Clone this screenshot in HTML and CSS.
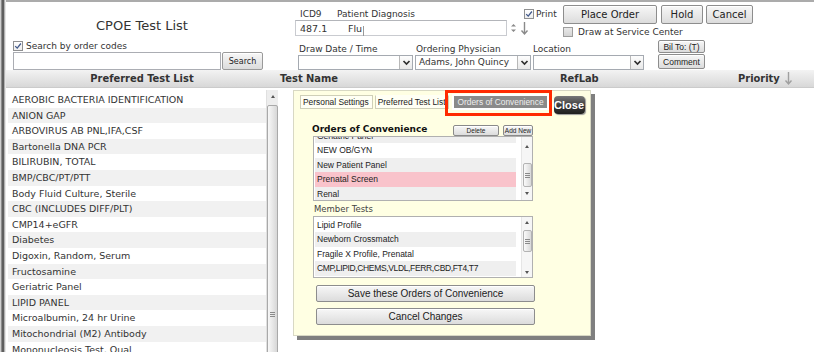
FILE: index.html
```html
<!DOCTYPE html>
<html lang="en">
<head>
    <meta charset="UTF-8">
    <title>CPOE Test List</title>
    <link rel="stylesheet" href="styles.css">
</head>
<body>
<div class="screen">
    <div class="edge"></div>
    <div class="app">

        <!-- Top bar: search + order form -->
        <div class="top">
            <div class="search-panel">
                <h1 class="title">CPOE Test List</h1>
                <div class="check-line">
                    <span class="cb"><svg viewBox="0 0 8 8" width="8" height="8"><path d="M1.2 4.1 3.2 6.1 6.9 1.5"/></svg></span>
                    <span>Search by order codes</span>
                </div>
                <div class="search-row">
                    <span class="textbox"></span>
                    <span class="btn btn-search">Search</span>
                </div>
            </div>

            <div class="order-form">
                <div class="lbl-icd"><span class="icd">ICD9</span><span>Patient Diagnosis</span></div>
                <div class="print">
                    <span class="cb"><svg viewBox="0 0 8 8" width="8" height="8"><path d="M1.2 4.1 3.2 6.1 6.9 1.5"/></svg></span>
                    <span>Print</span>
                </div>
                <span class="btn btn-top btn-place">Place Order</span>
                <span class="btn btn-top btn-hold">Hold</span>
                <span class="btn btn-top btn-cancel">Cancel</span>

                <div class="diag">
                    <div class="diag-box"><span class="diag-code">487.1</span><span>Flu</span><span class="caret"></span></div>
                    <svg class="spin" viewBox="0 0 7 12" width="7" height="12"><path d="M1 4.5 3.5 2 6 4.5Z M1 7.5 3.5 10 6 7.5Z"/></svg>
                    <svg class="down-arrow" viewBox="0 0 9 15" width="9" height="15"><path d="M4.5 1v12 M1.5 9.5 4.5 13 7.5 9.5"/></svg>
                </div>
                <div class="svc">
                    <span class="cb cb-off"></span>
                    <span>Draw at Service Center</span>
                </div>

                <div class="lbl lbl-date">Draw Date / Time</div>
                <div class="lbl lbl-phys">Ordering Physician</div>
                <div class="lbl lbl-loc">Location</div>
                <span class="btn btn-small btn-bill">Bil To: (T)</span>

                <div class="select sel-date">
                    <span class="select-val"></span>
                    <span class="select-btn"><svg viewBox="0 0 11 11" width="11" height="11"><path d="M2.5 4 5.5 7 8.5 4"/></svg></span>
                </div>
                <div class="select sel-phys">
                    <span class="select-val">Adams, John Quincy</span>
                    <span class="select-btn"><svg viewBox="0 0 11 11" width="11" height="11"><path d="M2.5 4 5.5 7 8.5 4"/></svg></span>
                </div>
                <div class="select sel-loc">
                    <span class="select-val"></span>
                    <span class="select-btn"><svg viewBox="0 0 11 11" width="11" height="11"><path d="M2.5 4 5.5 7 8.5 4"/></svg></span>
                </div>
                <span class="btn btn-small btn-comment">Comment</span>
            </div>
        </div>

        <!-- Column headers -->
        <div class="col-head">
            <div class="head-pref">Preferred Test List</div>
            <div class="head-name">Test Name</div>
            <div class="head-lab">RefLab</div>
            <div class="head-pri">Priority
                <svg class="sort" viewBox="0 0 9 15" width="9" height="15"><path d="M4.5 1v12 M1.5 9.5 4.5 13 7.5 9.5"/></svg>
            </div>
        </div>

        <div class="main">
            <!-- Preferred test list -->
            <div class="pref-list">
                <ul class="rows">
                    <li>AEROBIC BACTERIA IDENTIFICATION</li>
                    <li>ANION GAP</li>
                    <li>ARBOVIRUS AB PNL,IFA,CSF</li>
                    <li>Bartonella DNA PCR</li>
                    <li>BILIRUBIN, TOTAL</li>
                    <li>BMP/CBC/PT/PTT</li>
                    <li>Body Fluid Culture, Sterile</li>
                    <li>CBC (INCLUDES DIFF/PLT)</li>
                    <li>CMP14+eGFR</li>
                    <li>Diabetes</li>
                    <li>Digoxin, Random, Serum</li>
                    <li>Fructosamine</li>
                    <li>Geriatric Panel</li>
                    <li>LIPID PANEL</li>
                    <li>Microalbumin, 24 hr Urine</li>
                    <li>Mitochondrial (M2) Antibody</li>
                    <li>Mononucleosis Test, Qual</li>
                </ul>
                <div class="vscroll">
                    <span class="tri-up"></span>
                    <div class="vthumb"><span class="grip"></span></div>
                </div>
            </div>

            <!-- Test area with the orders of convenience dialog -->
            <div class="work">
                <div class="dialog">
                    <div class="tabs">
                        <span class="tab">Personal Settings</span>
                        <span class="tab tab-plain">Preferred Test List</span>
                        <span class="tab tab-on">Orders of Convenience</span>
                        <span class="btn-close">Close</span>
                    </div>
                    <div class="highlight"></div>

                    <div class="oc-head">
                        <h2>Orders of Convenience</h2>
                        <span class="btn btn-tiny btn-del">Delete</span>
                        <span class="btn btn-tiny btn-add">Add New</span>
                    </div>

                    <div class="listbox lb-orders">
                        <ul class="lb-rows">
                            <li class="alt">Geriatric Panel</li>
                            <li>NEW OB/GYN</li>
                            <li class="alt">New Patient Panel</li>
                            <li class="sel">Prenatal Screen</li>
                            <li class="alt">Renal</li>
                        </ul>
                        <div class="mscroll">
                            <span class="tri-up"></span>
                            <div class="mthumb"><span class="grip"></span></div>
                            <span class="tri-down"></span>
                        </div>
                    </div>

                    <div class="member-lbl">Member Tests</div>

                    <div class="listbox lb-members">
                        <ul class="lb-rows">
                            <li>Lipid Profile</li>
                            <li class="alt">Newborn Crossmatch</li>
                            <li>Fragile X Profile, Prenatal</li>
                            <li class="alt tight">CMP,LIPID,CHEMS,VLDL,FERR,CBD,FT4,T7</li>
                            <li>Urinalysis, Complete</li>
                        </ul>
                        <div class="mscroll">
                            <span class="tri-up"></span>
                            <div class="mthumb"><span class="grip"></span></div>
                            <span class="tri-down"></span>
                        </div>
                    </div>

                    <span class="btn btn-wide btn-save">Save these Orders of Convenience</span>
                    <span class="btn btn-wide btn-undo">Cancel Changes</span>
                </div>
            </div>
        </div>

    </div>
</div>
</body>
</html>
```

FILE: styles.css
```css
/* Reset */
* {
    margin: 0;
    padding: 0;
    box-sizing: border-box;
}

body {
    width: 814px;
    height: 352px;
    overflow: hidden;
    background: #fff;
    color: #333;
    font-family: "DejaVu Sans", Verdana, sans-serif;
}

ul {
    list-style: none;
}

.screen {
    display: flex;
    height: 352px;
}

/* Window edge on the left */
.edge {
    width: 6px;
    flex: none;
    background: linear-gradient(to right, #cfcfcf 0 1px, #8c8c8c 1px 2px, #5f5f5f 2px 4px, #b2b2b2 4px 5px, #e6e6e6 5px 6px);
}

.app {
    flex: 1;
    min-width: 0;
    display: flex;
    flex-direction: column;
    border-top: 2px solid #ababab;
}

/* Shared widgets */
.btn {
    display: flex;
    align-items: center;
    justify-content: center;
    border: 1px solid #8d8d8d;
    border-radius: 2px;
    background: linear-gradient(#f7f7f7, #dcdcdc);
    box-shadow: inset 0 1px #fff;
    color: #222;
    white-space: nowrap;
}

.cb {
    width: 10px;
    height: 10px;
    flex: none;
    display: inline-flex;
    align-items: center;
    justify-content: center;
    border: 1px solid #8f9091;
    background: linear-gradient(#fff, #ededed);
}

.cb path {
    fill: none;
    stroke: #42598a;
    stroke-width: 1.3;
}

.cb-off {
    background: linear-gradient(#e9e9e9, #d4d4d4);
    border-color: #9d9d9d;
}

/* Top bar */
.top {
    height: 68px;
    flex: none;
    display: flex;
}

.search-panel {
    width: 272px;
    flex: none;
    padding: 16px 0 0 7px;
}

.title {
    margin-left: -7px;
    height: 16px;
    font-size: 13px;
    font-weight: normal;
    line-height: 16px;
    text-align: center;
}

.check-line {
    margin-top: 6px;
    height: 12px;
    display: flex;
    align-items: center;
    gap: 3px;
    font-size: 9px;
}

.search-row {
    display: flex;
    height: 18px;
}

.textbox {
    width: 208px;
    border: 1px solid #abadb3;
    background: #fff;
}

.btn-search {
    width: 41px;
    margin-left: 1px;
    font-size: 8px;
    border-color: #9a9a9a;
}

/* Order form grid */
.order-form {
    margin-left: 17px;
    padding-top: 3px;
    display: grid;
    grid-template-columns: 120px 118px 30px 95px 48px 54px;
    grid-template-rows: 15px 18px 17px 15px;
    font-size: 9px;
}

.lbl-icd {
    grid-row: 1;
    grid-column: 1;
    align-self: end;
    display: flex;
    padding-left: 5px;
    line-height: 12px;
    white-space: nowrap;
}

.icd {
    width: 48px;
}

.print {
    grid-row: 1;
    grid-column: 2 / 4;
    align-self: end;
    margin: 0 0 1px 109px;
    display: flex;
    align-items: center;
    gap: 2px;
}

.btn-top {
    grid-row: 1 / 3;
    align-self: start;
    height: 19px;
    font-size: 10px;
}

.btn-place {
    grid-column: 4;
    width: 94px;
}

.btn-hold {
    grid-column: 5;
    width: 42px;
    margin-left: 3px;
}

.btn-cancel {
    grid-column: 6;
    width: 47px;
}

.diag {
    grid-row: 2;
    grid-column: 1 / 4;
    display: flex;
    align-items: center;
    height: 16px;
}

.diag-box {
    width: 212px;
    height: 16px;
    display: flex;
    align-items: center;
    border: 1px solid #c9cbd0;
    border-top-color: #b3b5ba;
    background: #fff;
    font-size: 9.5px;
}

.diag-code {
    width: 52px;
    padding-left: 4px;
}

.caret {
    width: 1px;
    height: 10px;
    margin: 5px 0 0 1px;
    background: #999;
}

.spin {
    margin-left: 3px;
    fill: #8a8a8a;
}

.down-arrow,
.sort {
    margin-left: 3px;
    fill: none;
    stroke: #8a8a8a;
    stroke-width: 1.4;
}

.svc {
    grid-row: 2;
    grid-column: 4 / 7;
    align-self: end;
    margin-bottom: 1px;
    display: flex;
    align-items: center;
    gap: 5px;
    white-space: nowrap;
}

.lbl {
    grid-row: 3;
    align-self: end;
    line-height: 12px;
    white-space: nowrap;
}

.lbl-date {
    grid-column: 1;
    padding-left: 4px;
}

.lbl-phys {
    grid-column: 2;
    padding-left: 1px;
}

.lbl-loc {
    grid-column: 3 / 5;
}

.btn-small {
    grid-column: 5;
    width: 47px;
    font-family: "Liberation Sans", Arial, sans-serif;
    font-size: 8.5px;
}

.btn-bill {
    grid-row: 3;
    align-self: start;
    height: 13px;
    margin-top: 2px;
}

.btn-comment {
    grid-row: 4;
    align-self: start;
    height: 15px;
    margin-top: -1px;
}

.select {
    grid-row: 4;
    height: 15px;
    display: flex;
    border: 1px solid #a5aab1;
    background: #fff;
}

.select-val {
    flex: 1;
    padding-left: 3px;
    font-size: 9px;
    line-height: 13px;
    white-space: nowrap;
    overflow: hidden;
}

.select-btn {
    width: 13px;
    display: flex;
    align-items: center;
    justify-content: center;
    border-left: 1px solid #b8b8b8;
    background: linear-gradient(#fdfdfd, #e8e8e8);
}

.select-btn path {
    fill: none;
    stroke: #2e2e2e;
    stroke-width: 1.7;
}

.sel-date {
    grid-column: 1;
    width: 115px;
    margin-left: 3px;
}

.sel-phys {
    grid-column: 2;
    width: 116px;
}

.sel-loc {
    grid-column: 3 / 5;
    width: 111px;
}

/* Column headers */
.col-head {
    height: 18px;
    flex: none;
    display: grid;
    grid-template-columns: 272px 282px 178px 1fr;
    align-items: center;
    background: linear-gradient(#f3f3f3, #d8d8d8);
    border-bottom: 1px solid #cbcbcb;
    font-family: "DejaVu Sans Condensed", "DejaVu Sans", sans-serif;
    font-size: 11px;
    font-weight: bold;
    color: #333;
}

.head-pref {
    text-align: center;
}

.head-name {
    padding-left: 2px;
}

.head-pri {
    display: flex;
    align-items: center;
}

.sort {
    margin-left: 4px;
    stroke: #a0a0a0;
}

/* Main area */
.main {
    flex: 1;
    min-height: 0;
    display: flex;
}

.pref-list {
    width: 272px;
    flex: none;
    display: flex;
    padding-top: 4px;
    overflow: hidden;
}

.rows {
    width: 258px;
    margin-left: 2px;
}

.rows li {
    height: 15.6px;
    line-height: 15.6px;
    padding-left: 4px;
    font-size: 9.5px;
    white-space: nowrap;
}

.rows li:nth-child(even) {
    background: #f1f1f1;
}

.vscroll {
    width: 12px;
    flex: none;
    margin-top: -2px;
    display: flex;
    flex-direction: column;
    align-items: center;
    background: #ededed;
    border-left: 1px solid #e0e0e0;
}

.tri-up,
.tri-down {
    width: 0;
    height: 0;
    border-left: 2.5px solid transparent;
    border-right: 2.5px solid transparent;
}

.tri-up {
    border-bottom: 3px solid #555;
}

.tri-down {
    border-top: 3px solid #555;
}

.vscroll .tri-up {
    margin-top: 5px;
}

.vthumb {
    width: 11px;
    height: 420px;
    flex: none;
    margin-top: 7px;
    padding-top: 206px;
    display: flex;
    justify-content: center;
    border: 1px solid #a9a9a9;
    border-radius: 2px;
    background: linear-gradient(to right, #f8f8f8, #d7d7d7);
}

.grip {
    width: 5px;
    height: 5px;
    background: linear-gradient(#8a8a8a 0 1px, transparent 1px 2px, #8a8a8a 2px 3px, transparent 3px 4px, #8a8a8a 4px 5px);
}

.work {
    flex: 1;
    padding: 2px 0 0 15px;
}

/* Orders of convenience dialog */
.dialog {
    position: relative;
    width: 298px;
    height: 246px;
    display: flex;
    flex-direction: column;
    align-items: flex-start;
    background: #ffffe3;
    border: 1px solid #d8d8c4;
    box-shadow: 4px 4px 0 #7f7f7f;
    font-family: "Liberation Sans", Arial, sans-serif;
}

.tabs {
    margin: 4px 0 0 6px;
    display: flex;
    align-items: flex-start;
    font-size: 8.4px;
}

.tab {
    height: 14px;
    padding: 0 3px 0 2px;
    display: flex;
    align-items: center;
    border: 1px solid #cfcfb8;
    background: #fffff4;
    color: #222;
    white-space: nowrap;
}

.tab-plain {
    margin-left: 2px;
    border-top-color: #fffff4;
}

.tab-on {
    height: 12px;
    margin: 1px 0 0 5px;
    padding: 0 3px;
    border: none;
    background: #8a8a8a;
    color: #eee;
    box-shadow: 0 0 0 2px #fff;
}

.btn-close {
    width: 31px;
    height: 18px;
    margin: 1px 0 0 7px;
    display: flex;
    align-items: center;
    justify-content: center;
    border-radius: 4px;
    background: linear-gradient(#7a7a7a, #3a3a3a 55%, #1e1e1e);
    box-shadow: 1px 1px 1px #999;
    color: #fff;
    font-size: 11px;
    font-weight: bold;
}

/* annotation box drawn over the active tab */
.highlight {
    position: absolute;
    left: 151px;
    top: -1px;
    width: 107px;
    height: 26px;
    border: 3px solid #ff2a00;
}

.oc-head {
    margin: 10px 0 0 18px;
    height: 12px;
    display: flex;
    align-items: flex-start;
}

.oc-head h2 {
    width: 141px;
    font-family: "DejaVu Sans", Verdana, sans-serif;
    font-size: 9px;
    line-height: 11px;
    color: #111;
}

.btn-tiny {
    height: 11px;
    margin-top: 1px;
    font-size: 6.5px;
    border-color: #8a8a8a;
}

.btn-del {
    width: 46px;
}

.btn-add {
    width: 30px;
    margin-left: 4px;
}

.listbox {
    margin-left: 19px;
    width: 220px;
    display: flex;
    border: 1px solid #b0b0b0;
    background: #fff;
    overflow: hidden;
}

.lb-orders {
    height: 65px;
}

.lb-members {
    height: 62px;
}

.lb-rows {
    width: 201px;
    margin-left: 1px;
    flex: none;
}

.lb-orders .lb-rows {
    margin-top: -8px;
}

.lb-members .lb-rows {
    margin-top: 1px;
}

.lb-rows li {
    height: 14.4px;
    line-height: 14.4px;
    padding-left: 2px;
    font-size: 8.5px;
    color: #222;
    white-space: nowrap;
}

.lb-rows .alt {
    background: #efefef;
}

.lb-rows .sel {
    background: #f9c3cb;
}

.lb-rows .tight {
    letter-spacing: -0.35px;
}

.mscroll {
    width: 11px;
    margin-left: 5px;
    display: flex;
    flex-direction: column;
    align-items: center;
    background: #f6f6f6;
    border-left: 1px solid #e6e6e6;
}

.mthumb {
    width: 9px;
    flex: none;
    display: flex;
    align-items: center;
    justify-content: center;
    border: 1px solid #b3b3b3;
    border-radius: 2px;
    background: linear-gradient(to right, #fafafa, #d9d9d9);
}

.lb-orders .tri-up {
    margin-top: 8px;
}

.lb-orders .mthumb {
    height: 24px;
    margin-top: 15px;
}

.lb-orders .tri-down {
    margin-top: 5px;
}

.lb-members .tri-up {
    margin-top: 4px;
}

.lb-members .mthumb {
    height: 22px;
    margin-top: 6px;
}

.lb-members .tri-down {
    margin-top: 19px;
}

.member-lbl {
    margin: 2px 0 0 20px;
    height: 13px;
    line-height: 13px;
    font-family: "DejaVu Sans", Verdana, sans-serif;
    font-size: 8.5px;
    color: #444;
}

.btn-wide {
    width: 219px;
    height: 17px;
    margin-left: 22px;
    font-size: 10px;
}

.btn-save {
    margin-top: 7px;
}

.btn-undo {
    margin-top: 6px;
}
```
